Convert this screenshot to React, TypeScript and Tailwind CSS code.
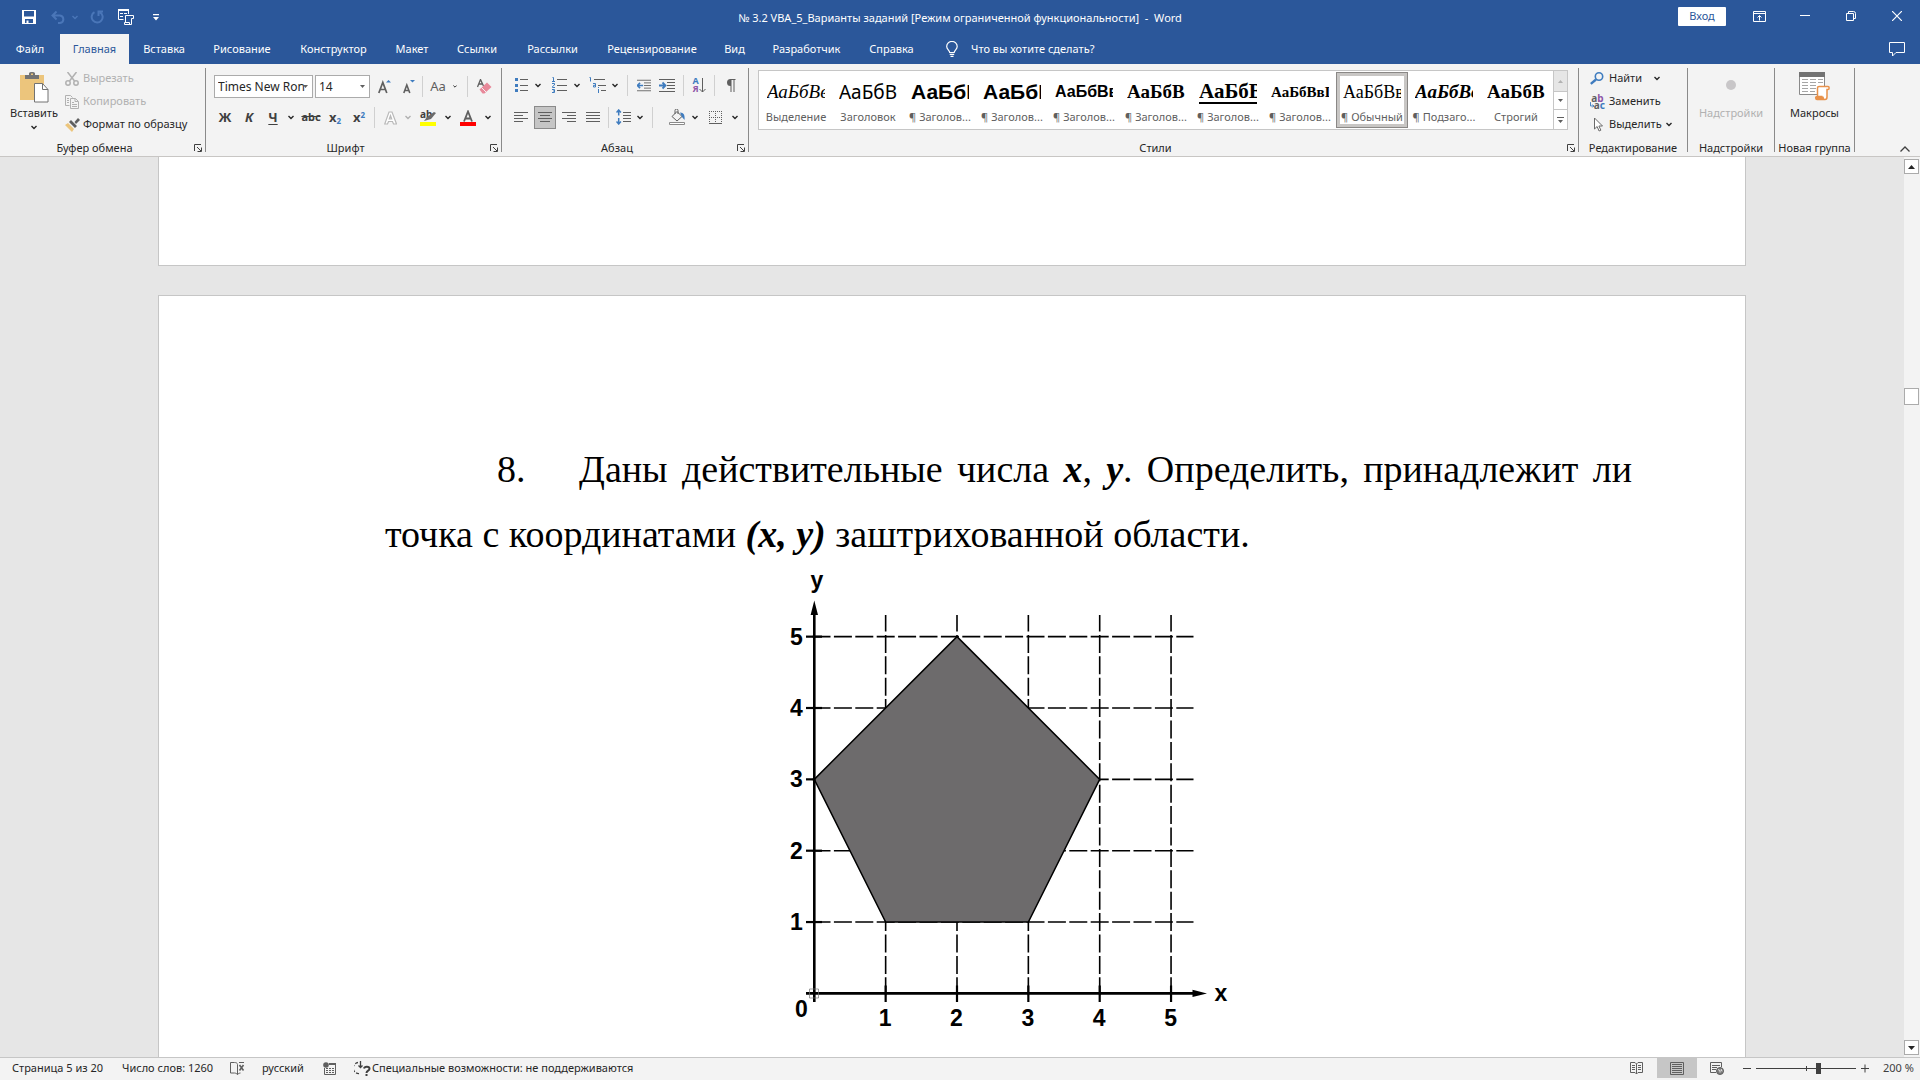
import type { ReactNode } from "react";

const tabs = [
  { name: "Файл", width: "w-[60px]" },
  { name: "Главная", width: "w-[69px]" },
  { name: "Вставка", width: "w-[70px]" },
  { name: "Рисование", width: "w-[86px]" },
  { name: "Конструктор", width: "w-[97px]" },
  { name: "Макет", width: "w-[60px]" },
  { name: "Ссылки", width: "w-[70px]" },
  { name: "Рассылки", width: "w-[81px]" },
  { name: "Рецензирование", width: "w-[118px]" },
  { name: "Вид", width: "w-[47px]" },
  { name: "Разработчик", width: "w-[97px]" },
  { name: "Справка", width: "w-[73px]" },
];

const serif = "font-['Liberation_Serif','Times_New_Roman',serif]";
const sans = "font-['Liberation_Sans',Arial,sans-serif]";

const styles = [
  { name: "Выделение", sample: "АаБбВвГ", look: `${serif} text-[19px] italic` },
  { name: "Заголовок", sample: "АаБбВ", look: "text-[19px]" },
  { name: "¶ Заголов...", sample: "АаБбВ", look: `${sans} text-[21px] font-bold` },
  { name: "¶ Заголов...", sample: "АаБбВ", look: `${sans} text-[21px] font-bold` },
  { name: "¶ Заголов...", sample: "АаБбВвГ", look: `${sans} text-[16px] font-bold` },
  { name: "¶ Заголов...", sample: "АаБбВ", look: `${serif} text-[19px] font-bold` },
  { name: "¶ Заголов...", sample: "АаБбВ", look: `${serif} text-[21px] font-bold underline decoration-2 underline-offset-4` },
  { name: "¶ Заголов...", sample: "АаБбВвГ", look: `${serif} text-[15px] font-bold` },
  { name: "¶ Обычный", sample: "АаБбВвГ", look: `${serif} text-[18px]`, active: true },
  { name: "¶ Подзаго...", sample: "АаБбВвГ", look: `${serif} text-[19px] font-bold italic` },
  { name: "Строгий", sample: "АаБбВ", look: `${serif} text-[19px] font-bold` },
];

function Chevron({ color = "#262626" }: { color?: string }) {
  return (
    <svg width="6" height="5" viewBox="0 0 6 5" fill="none" stroke={color} strokeWidth="1.4">
      <path d="M.5 1 3 3.5 5.5 1" />
    </svg>
  );
}

function Cell({ w, label, children }: { w: string; label: string; children: ReactNode }) {
  return (
    <button aria-label={label} className={`flex h-6 shrink-0 items-center justify-center ${w}`}>
      {children}
    </button>
  );
}

function Sep({ m = "" }: { m?: string }) {
  return <span className={`h-[21px] w-px shrink-0 bg-[#d0d0d0] ${m}`} />;
}

function Lines({ rows }: { rows: [number, number][] }) {
  return (
    <svg width="14" height="13" viewBox="0 0 14 13" stroke="#5f5f5f">
      {rows.map(([a, b], i) => (
        <path key={i} d={`M${a} ${i * 3 + 1.5}H${b}`} />
      ))}
    </svg>
  );
}

function Group({ name, w, launcher, children }: { name: string; w: string; launcher?: boolean; children: ReactNode }) {
  return (
    <section className={`flex h-[84px] flex-col border-r border-[#8a8a8a] ${w}`}>
      <div className="h-[72px]">{children}</div>
      <div className={`relative flex h-3 items-center justify-center pt-[3px] ${launcher ? "pr-4" : ""}`}>
        <span className="leading-4 whitespace-nowrap">{name}</span>
        {launcher && (
          <button aria-label={`${name}: параметры`} className="absolute top-1 right-[3px]">
            <svg width="8" height="8" viewBox="0 0 8 8" fill="none" stroke="#404040">
              <path d="M.5 7V.5H7M3 3l4 4M7.500 3.500v4H3.500" />
            </svg>
          </button>
        )}
      </div>
    </section>
  );
}

function TitleBar() {
  return (
    <header className="relative flex h-[34px] shrink-0 items-center bg-[#2b579a] text-white">
      <div className="flex items-center pl-[22px]">
        <button aria-label="Сохранить">
          <svg width="14" height="14" viewBox="0 0 14 14">
            <path fill="#fff" fillRule="evenodd" d="M0 0h14v14H0zM2 1v5.500h10V1zM3 9v4h1.500v-2.500h2V13H11V9z" />
          </svg>
        </button>
        <button aria-label="Отменить" className="ml-[15px] flex items-center gap-[7px]">
          <svg width="14" height="13" viewBox="0 0 14 13" fill="none" stroke="#4a76b8" strokeWidth="2">
            <path d="M1.500 4.500H9a4 3.800 0 0 1 0 7.500H7M5.500.5l-4 4 4 4" />
          </svg>
          <Chevron color="#4a76b8" />
        </button>
        <button aria-label="Повторить" className="ml-[12px]">
          <svg width="14" height="14" viewBox="0 0 14 14" fill="none" stroke="#4a76b8" strokeWidth="2">
            <path d="M4.500 2.200A5.500 5.500 0 1 0 10 2.300M8.500 6V1.500H13" />
          </svg>
        </button>
        <button aria-label="Печать" className="ml-[14px]">
          <svg width="17" height="16" viewBox="0 0 17 16" fill="none" stroke="#fff">
            <path strokeWidth="2" d="M0 1h11" />
            <path d="M.5 1v9.500h5M10.500 1v4M2 4.500h3M6 4.500h3M2 7.500h3M7.500 13.500v-7h8v3h-2v6h-7v-2h5v2" />
          </svg>
        </button>
        <button aria-label="Настройка панели" className="ml-[18px]">
          <svg width="6" height="7" viewBox="0 0 6 7">
            <path fill="#fff" d="M0 0h6v1.200H0zM0 3h6L3 6.500z" />
          </svg>
        </button>
      </div>
      <h1 className="pointer-events-none absolute inset-x-0 top-[6px] text-center text-[11px] leading-6 whitespace-pre">
        № 3.2 VBA_5_Варианты заданий [Режим ограниченной функциональности]  -  Word
      </h1>
      <div className="ml-auto flex items-center pb-[2px]">
        <button className="mr-[10px] h-[19px] w-12 rounded-[1px] bg-white text-[#2b579a]">Вход</button>
        <button aria-label="Параметры ленты" className="flex w-[46px] justify-center">
          <svg width="13" height="11" viewBox="0 0 13 11" fill="none" stroke="#fff">
            <path d="M.5.5h12v10H.5zM.5 2.500h12M6.500 9.500v-5M4.500 6.500l2-2 2 2" />
          </svg>
        </button>
        <button aria-label="Свернуть" className="flex w-[46px] justify-center">
          <svg width="10" height="10" viewBox="0 0 10 10" stroke="#fff">
            <path d="M0 4.500h10" />
          </svg>
        </button>
        <button aria-label="Свернуть в окно" className="flex w-[46px] justify-center">
          <svg width="10" height="10" viewBox="0 0 10 10" fill="none" stroke="#fff">
            <path d="M.5 2.500h7v7h-7zM2.500 2V.5h5a2 2 0 0 1 2 2v5H8" />
          </svg>
        </button>
        <button aria-label="Закрыть" className="flex w-[46px] justify-center">
          <svg width="10" height="10" viewBox="0 0 10 10" stroke="#fff" strokeWidth="1.200">
            <path d="m0 0 10 10M10 0 0 10" />
          </svg>
        </button>
      </div>
    </header>
  );
}

function TabBar() {
  return (
    <nav className="flex h-[30px] shrink-0 bg-[#2b579a] text-white">
      {tabs.map((tab) => (
        <button
          key={tab.name}
          className={`${tab.width} h-[30px] pt-px text-center ${tab.name === "Главная" ? "bg-[#f3f3f3] text-[#2b579a]" : ""}`}
        >
          {tab.name}
        </button>
      ))}
      <button className="flex items-center gap-[13px] pl-[18px]">
        <svg width="12" height="16" viewBox="0 0 12 16" fill="none" stroke="#fff" strokeWidth="1.200">
          <path d="M3.700 11.500c0-2-3-3-3-6a5.200 5 0 0 1 10.500 0c0 3-3 4-3 6zM3.700 13.400h4.500M4.500 15.300h3" />
        </svg>
        Что вы хотите сделать?
      </button>
      <button aria-label="Примечания" className="mr-[15px] ml-auto">
        <svg width="16" height="15" viewBox="0 0 16 15" fill="none" stroke="#fff">
          <path d="M.5.5h15v10H7L3.500 14v-3.500h-3z" />
        </svg>
      </button>
    </nav>
  );
}

function Clipboard() {
  return (
    <Group name="Буфер обмена" w="w-[206px]" launcher>
      <div className="flex">
        <button className="flex w-[65px] flex-col items-center pt-1 pl-[3px]">
          <svg width="29" height="31" viewBox="0 0 29 31">
            <path fill="#ecc57c" d="M0 3h24v25H0z" />
            <path fill="#737373" d="M5 3h4V1.500C9 .5 10 0 12 0s3 .5 3 1.500V3h4v4H5z" />
            <path fill="#ecc57c" d="M11 1.500h2V3h-2z" />
            <path fill="#fff" stroke="#737373" d="M14.500 11.500h8l5.500 6v12.500H14.500z" />
            <path fill="none" stroke="#737373" d="M22.500 11.500v6H28" />
          </svg>
          <span className="mt-px leading-[18px]">Вставить</span>
          <span className="mt-[3px]"><Chevron /></span>
        </button>
        <div className="-mt-px flex flex-col">
          <button className="flex h-[23px] items-center text-[#b1b1b1]">
            <svg width="14" height="14" viewBox="0 0 14 14" fill="none" stroke="#b1b1b1" strokeWidth="1.500">
              <path d="m2.500 0 7 9M11.500 0l-7 9" />
              <circle cx="3" cy="11" r="2.200" />
              <circle cx="11" cy="11" r="2.200" />
            </svg>
            <span className="pl-1">Вырезать</span>
          </button>
          <button className="flex h-[23px] items-center text-[#b1b1b1]">
            <svg width="14" height="14" viewBox="0 0 14 14" fill="none" stroke="#b1b1b1">
              <path d="M4.500 10.500h-4v-10h5l2 2M2 3.500h2M2 5.500h2M2 7.500h2M5.500 3.500h5l3 3v7h-8zM10 3.500v3h3M7 7.500h2M7 9.500h5M7 11.500h5" />
            </svg>
            <span className="pl-1">Копировать</span>
          </button>
          <button className="flex h-[23px] items-center">
            <svg width="15" height="14" viewBox="0 0 15 14">
              <path fill="#ecc57c" d="m0 7 3-2 6 6-2 3z" />
              <path fill="#5f5f5f" d="m4 4 2-2 6 6-2 2zM9.500 4 13 0l2 2-4 4z" />
            </svg>
            <span className="pl-[3px] whitespace-nowrap">Формат по образцу</span>
          </button>
        </div>
      </div>
    </Group>
  );
}

function Combo({ label, options, w }: { label: string; options: string[]; w: string }) {
  return (
    <label className={`relative h-[23px] ${w}`}>
      <select
        aria-label={label}
        className="h-full w-full appearance-none overflow-hidden border border-[#ababab] bg-white pl-[3px] text-[12px] text-clip text-[#262626]"
      >
        {options.map((o) => (
          <option key={o}>{o}</option>
        ))}
      </select>
      <svg width="5" height="3" viewBox="0 0 5 3" className="pointer-events-none absolute top-[10px] right-[5px]">
        <path fill="#606060" d="M0 0h5L2.500 3z" />
      </svg>
    </label>
  );
}

function FontGroup() {
  return (
    <Group name="Шрифт" w="w-[296px]" launcher>
      <div className="flex h-[37px] items-center pl-2">
        <Combo label="Шрифт" options={["Times New Ron", "Arial"]} w="w-[99px]" />
        <span className="w-[2px]" />
        <Combo label="Размер" options={["14", "16"]} w="w-[55px]" />
        <Cell w="w-[28px]" label="Увеличить размер">
          <svg width="13" height="16" viewBox="0 0 13 16">
            <path fill="none" stroke="#5f5f5f" strokeWidth="1.700" d="m.8 14 4-10.500 4 10.500M2 10.500h5.500" />
            <path fill="#3f7cbf" d="M8 3.500 10.500 1 13 3.500z" />
          </svg>
        </Cell>
        <Cell w="w-[22px]" label="Уменьшить размер">
          <svg width="12" height="16" viewBox="0 0 12 16">
            <path fill="none" stroke="#5f5f5f" strokeWidth="1.600" d="m.8 14 3-8 3 8M1.800 11.500h4" />
            <path fill="#3f7cbf" d="M7 1h5L9.500 3.500z" />
          </svg>
        </Cell>
        <Sep m="ml-[2px]" />
        <Cell w="w-[30px]" label="Регистр"><span className="text-[13px] text-[#5f5f5f]">Aa</span></Cell>
        <Cell w="w-[4px]" label="Варианты регистра"><Chevron /></Cell>
        <Sep m="ml-[10px]" />
        <Cell w="w-[33px]" label="Очистить формат">
          <svg width="15" height="15" viewBox="0 0 15 15">
            <path fill="none" stroke="#5f5f5f" strokeWidth="1.300" d="M.5 8 3.500.5 6.500 7M1.500 5h4" />
            <path fill="#e8899a" d="m2.500 10.500 7.500-7 4.500 4.500-7 6.500H5.500z" />
            <path stroke="#f3f3f3" d="m4.500 8.500 4.500 4.500" />
          </svg>
        </Cell>
      </div>
      <div className="flex h-[25px] items-center pl-[7px] text-[#404040]">
        <Cell w="w-[24px]" label="Полужирный"><b className="text-[13px]">Ж</b></Cell>
        <Cell w="w-[24px]" label="Курсив"><b className="text-[13px] italic">К</b></Cell>
        <Cell w="w-[24px]" label="Подчеркнутый"><b className="text-[13px] underline underline-offset-2">Ч</b></Cell>
        <Cell w="w-[12px]" label="Вид подчеркивания"><Chevron /></Cell>
        <Cell w="w-[28px]" label="Зачеркнутый"><b className="text-[11px] line-through">abc</b></Cell>
        <Cell w="w-[20px]" label="Подстрочный">
          <b className="text-[13px]">x<sub className="text-[8px] text-[#3f7cbf]">2</sub></b>
        </Cell>
        <Cell w="w-[28px]" label="Надстрочный">
          <b className="text-[13px]">x<sup className="text-[8px] text-[#3f7cbf]">2</sup></b>
        </Cell>
        <Sep m="ml-px" />
        <Cell w="w-[30px]" label="Текстовые эффекты">
          <svg width="13" height="14" viewBox="0 0 13 14" fill="#fff" stroke="#b9b9b9" strokeWidth="1.200">
            <path d="M5 1h3l4.500 12H9.500l-1-2.500h-4l-1 2.500H.7zM6.500 4.500l-1.200 3.500h2.400z" />
          </svg>
        </Cell>
        <Cell w="w-[6px]" label="Варианты эффектов"><Chevron color="#b1b1b1" /></Cell>
        <Cell w="w-[34px]" label="Цвет выделения">
          <span className="relative flex h-4 w-4 flex-col justify-end">
            <b className="absolute -top-px left-0 text-[10px] leading-[10px]">ab</b>
            <svg width="12" height="9" viewBox="0 0 12 9" className="absolute top-[2px] right-0">
              <path fill="#6a6a6a" d="m0 9 3-4L10 0l2 1-5 6z" />
            </svg>
            <span className="h-1 bg-[#ffff00]" />
          </span>
        </Cell>
        <Cell w="w-[6px]" label="Палитра выделения"><Chevron /></Cell>
        <Cell w="w-[34px]" label="Цвет текста">
          <svg width="16" height="16" viewBox="0 0 16 16">
            <path fill="none" stroke="#5f5f5f" strokeWidth="1.800" d="m4 11.500 4-10 4 10M5 8.500h6" />
            <path fill="#f00" d="M0 12h16v4H0z" />
          </svg>
        </Cell>
        <Cell w="w-[6px]" label="Палитра текста"><Chevron /></Cell>
      </div>
    </Group>
  );
}

function IndentIcon({ flip }: { flip?: boolean }) {
  return (
    <svg width="16" height="13" viewBox="0 0 16 13" fill="none" stroke="#5f5f5f">
      <path d="M0 .5h16M8 3.500h8M8 6.500h8M8 9.500h8M0 12.500h16" />
      <path stroke="#3f7cbf" strokeWidth="1.800" d={flip ? "M0 6.500h6M3.500 3.500l3 3-3 3" : "M1 6.500h6M3.500 3.500l-3 3 3 3"} />
    </svg>
  );
}

function ParagraphGroup() {
  return (
    <Group name="Абзац" w="w-[247px]" launcher>
      <div className="flex h-[34px] items-center pl-[10px]">
        <Cell w="w-[18px]" label="Маркеры">
          <svg width="13" height="14" viewBox="0 0 13 14" stroke="#5f5f5f">
            <path d="M5 1.500h8M5 7.500h8M5 12.500h8" />
            <path stroke="none" fill="#3f7cbf" d="M0 0h3v3H0zM0 6h3v3H0zM0 11h3v3H0z" />
          </svg>
        </Cell>
        <Cell w="w-[16px]" label="Библиотека маркеров"><Chevron /></Cell>
        <Cell w="w-[26px]" label="Нумерация">
          <svg width="15" height="16" viewBox="0 0 15 16" fill="none" stroke="#5f5f5f">
            <path d="M5 2.500h10M5 8.500h10M5 13.500h10" />
            <path stroke="#3f7cbf" d="M.5.500h1v4M0 4.500h3M0 6.500h2.500v1.500l-2 1.500v1H3M0 12.500h2.500V15.500H0M1 14h1.500" />
          </svg>
        </Cell>
        <Cell w="w-[10px]" label="Библиотека номеров"><Chevron /></Cell>
        <Cell w="w-[30px]" label="Многоуровневый список">
          <svg width="17" height="16" viewBox="0 0 17 16" fill="none" stroke="#5f5f5f">
            <path d="M5 2.500h11M9 8.500h8M12 13.500h5" />
            <path stroke="#3f7cbf" d="M.5.500h1v4M4 6.500h2.500v3.500h-2V8.300h2M9.500 10v1M9.500 12v4" />
          </svg>
        </Cell>
        <Cell w="w-[6px]" label="Список уровней"><Chevron /></Cell>
        <Sep m="mx-[9px]" />
        <Cell w="w-[14px]" label="Уменьшить отступ"><IndentIcon /></Cell>
        <Cell w="w-[32px]" label="Увеличить отступ"><IndentIcon flip /></Cell>
        <Sep />
        <Cell w="w-[30px]" label="Сортировка">
          <span className="flex items-center">
            <b className="flex flex-col text-[9px] leading-[8px]">
              <span className="text-[#3f7cbf]">А</span>
              <span className="text-[#8e56a8]">Я</span>
            </b>
            <svg width="7" height="15" viewBox="0 0 7 15" fill="none" stroke="#5f5f5f">
              <path d="M3.500 0v14M.5 11l3 3 3-3" />
            </svg>
          </span>
        </Cell>
        <Sep />
        <Cell w="w-[30px]" label="Все знаки">
          <svg width="11" height="13" viewBox="0 0 11 13">
            <path fill="#5f5f5f" d="M10.500 0v1H9.500v12h-1V1h-2v12h-1V7a3.500 3.500 0 1 1 0-7z" />
          </svg>
        </Cell>
      </div>
      <div className="flex h-[30px] items-center pl-[7px]">
        <Cell w="w-[24px]" label="По левому краю"><Lines rows={[[0, 14], [0, 9], [0, 14], [0, 9]]} /></Cell>
        <span className="mx-px flex h-[23px] w-[22px] items-center justify-center border border-[#8a8a8a] bg-[#c5c5c5]">
          <Cell w="w-[20px]" label="По центру"><Lines rows={[[0, 14], [2, 12], [0, 14], [2, 12]]} /></Cell>
        </span>
        <Cell w="w-[24px]" label="По правому краю"><Lines rows={[[0, 14], [5, 14], [0, 14], [5, 14]]} /></Cell>
        <Cell w="w-[24px]" label="По ширине"><Lines rows={[[0, 14], [0, 14], [0, 14], [0, 14]]} /></Cell>
        <Sep m="ml-[3px]" />
        <Cell w="w-[28px]" label="Интервал">
          <svg width="15" height="16" viewBox="0 0 15 16" fill="none" stroke="#5f5f5f">
            <path d="M7 3.500h8M7 6.500h8M7 9.500h8M7 12.500h8" />
            <path stroke="#3f7cbf" strokeWidth="1.500" d="M2.700 1v5.500M.5 3.500l2.200-2.500 2.200 2.500M2.700 9v5.500M.5 12.500l2.200 2.500 2.200-2.500" />
          </svg>
        </Cell>
        <Cell w="w-[6px]" label="Варианты интервала"><Chevron /></Cell>
        <Sep m="mx-[9px]" />
        <Cell w="w-[30px]" label="Заливка">
          <svg width="17" height="16" viewBox="0 0 17 16" fill="none">
            <path stroke="#5f5f5f" d="m3 7.500 5-5 5 5-5 4.500zM6 5V1.500a1.500 1.500 0 0 1 3 0V5" />
            <path fill="#3f7cbf" d="M11 3.500c4 0 5 3 4.500 7.500L13 8z" />
            <path fill="#fff" stroke="#8a8a8a" d="M.5 13.500h15v2H.5z" />
          </svg>
        </Cell>
        <Cell w="w-[6px]" label="Палитра заливки"><Chevron /></Cell>
        <Cell w="w-[34px]" label="Границы">
          <svg width="13" height="13" viewBox="0 0 13 13" fill="none" stroke="#5f5f5f">
            <path strokeDasharray="1 1" d="M0 .5h13M.5 0v12M12.500 0v12M6.500 0v12M0 6.500h13" />
            <path d="M0 12.500h13" />
          </svg>
        </Cell>
        <Cell w="w-[6px]" label="Виды границ"><Chevron /></Cell>
      </div>
    </Group>
  );
}

function StylesGroup() {
  return (
    <Group name="Стили" w="flex-1" launcher>
      <div className="mr-[10px] ml-[9px] flex pt-[2px]">
        <div className="flex h-[60px] flex-1 items-center border border-[#c6c6c6] bg-white pl-px">
          {styles.map((s, i) => (
            <button
              key={i}
              className={`flex h-14 w-[72px] shrink-0 flex-col items-center overflow-hidden ${s.active ? "border border-[#8a8886] pt-px shadow-[inset_0_0_0_3px_#c8c6c4]" : "pt-[2px]"}`}
            >
              <span className={`flex h-9 w-[58px] shrink-0 items-center overflow-hidden whitespace-nowrap text-black ${s.look}`}>
                {s.sample}
              </span>
              <span className="text-[11px] leading-[14px] whitespace-nowrap text-[#5f5f5f]">{s.name}</span>
            </button>
          ))}
        </div>
        <div className="flex w-[14px] flex-col border border-l-0 border-[#c6c6c6]">
          <button aria-label="Вверх" className="flex h-5 items-center justify-center bg-[#e6e6e6]">
            <svg width="5" height="3" viewBox="0 0 5 3"><path fill="#b1b1b1" d="M0 3h5L2.500 0z" /></svg>
          </button>
          <button aria-label="Вниз" className="flex h-[19px] items-center justify-center border-y border-[#c6c6c6] bg-white">
            <svg width="5" height="3" viewBox="0 0 5 3"><path fill="#5f5f5f" d="M0 0h5L2.500 3z" /></svg>
          </button>
          <button aria-label="Все стили" className="flex h-[19px] items-center justify-center bg-white">
            <svg width="7" height="6" viewBox="0 0 7 6"><path fill="#5f5f5f" d="M0 0h7v1H0zM1 3h5L3.500 6z" /></svg>
          </button>
        </div>
      </div>
    </Group>
  );
}

function EditingGroup() {
  return (
    <Group name="Редактирование" w="w-[109px]">
      <div className="-mt-px flex flex-col items-start pl-[11px]">
        <button className="flex h-[23px] items-center">
          <svg width="15" height="13" viewBox="0 0 15 13" fill="none" stroke="#3f7cbf">
            <circle cx="9" cy="4.500" r="3.700" strokeWidth="1.600" />
            <path strokeWidth="2.400" d="M6 7.500.8 11.800" />
          </svg>
          <span className="pr-[12px] pl-1">Найти</span>
          <Chevron />
        </button>
        <button className="flex h-[23px] items-center">
          <span className="flex w-[15px] flex-col text-[10px] leading-[7px] font-bold">
            <span className="text-[#5f5f5f]">a<span className="text-[#8e56a8]">b</span></span>
            <span className="flex justify-end text-[#5f5f5f]">
              <svg width="4" height="6" viewBox="0 0 4 6" fill="none" stroke="#3f7cbf"><path d="M.5 0v4H4M2.500 2.500 4 4 2.500 5.500" /></svg>
              a<span className="text-[#3f7cbf]">c</span>
            </span>
          </span>
          <span className="pl-1">Заменить</span>
        </button>
        <button className="flex h-[23px] items-center">
          <svg width="15" height="15" viewBox="0 0 15 15" fill="#fff" stroke="#6a6a6a">
            <path d="M4.500 1v11l2.600-2.500 2 4.500 1.800-.8-2-4.200h3.600z" />
          </svg>
          <span className="pr-[4px] pl-1">Выделить</span>
          <Chevron />
        </button>
      </div>
    </Group>
  );
}

function Ribbon() {
  return (
    <div className="flex h-[93px] shrink-0 border-b border-[#c8c6c4] bg-[#f3f3f3] pt-1">
      <Clipboard />
      <FontGroup />
      <ParagraphGroup />
      <StylesGroup />
      <EditingGroup />
      <Group name="Надстройки" w="w-[87px]">
        <button disabled className="flex w-full flex-col items-center pt-3 text-[#b1b1b1]">
          <span className="h-[10px] w-[10px] rounded-full bg-[#c8c6c8]" />
          <span className="mt-[14px] leading-[18px]">Надстройки</span>
        </button>
      </Group>
      <Group name="Новая группа" w="w-[80px]">
        <button className="flex w-full flex-col items-center pt-1">
          <svg width="31" height="29" viewBox="0 0 31 29">
            <path fill="#fff" stroke="#8a8a8a" d="M.5 2.500h25v20H.5z" />
            <path fill="#737373" d="M0 0h26v5H0z" />
            <path stroke="#a6a6a6" d="M3 7.500h6M11 7.500h6M19 7.500h5M3 10.500h6M11 10.500h6M19 10.500h5M3 13.500h6M11 13.500h6M3 16.500h6M11 16.500h6M3 19.500h6M11 19.500h5" />
            <path fill="#fff" stroke="#e8914a" strokeWidth="1.500" d="M18.500 24V16c0-1 .5-1.500 1.500-1.500h9c1.500 0 1.500 3 0 3h-1V25c0 2-.5 2.500-2 2.500h-8c-1.500 0-2-3 0-3h5.500" />
            <path fill="#e8914a" d="M17 24.500h7.500l1 3H17z" />
          </svg>
          <span className="mt-[3px] leading-[18px]">Макросы</span>
        </button>
      </Group>
      <div className="flex w-[65px] items-end justify-end pr-[10px] pb-1">
        <button aria-label="Свернуть ленту">
          <svg width="10" height="6" viewBox="0 0 10 6" fill="none" stroke="#404040" strokeWidth="1.300">
            <path d="M.5 5.500 5 1l4.500 4.500" />
          </svg>
        </button>
      </div>
    </div>
  );
}

const step = 71.35;
const px = (n: number) => 53.3 + n * step;
const py = (n: number) => 433.4 - n * step;
const marks = [1, 2, 3, 4, 5];
const pentagon = [[0, 3], [2, 5], [4, 3], [3, 1], [1, 1]].map(([x, y]) => `${px(x)},${py(y)}`).join(" ");

function Plot() {
  return (
    <svg width="438" height="466" viewBox="29 11 438 466" className={`mx-auto mt-1 block ${sans} text-[23px] font-bold`}>
      <g stroke="#000" strokeWidth="1.600" strokeDasharray="18 3.400">
        {marks.map((n) => (
          <g key={n}>
            <path d={`M51.500 ${py(n)}H432.500`} />
            <path d={`M${px(n)} 435.300V55`} />
          </g>
        ))}
      </g>
      <polygon points={pentagon} fill="#6d6b6c" stroke="#000" strokeWidth="1.500" />
      <g stroke="#000" strokeWidth="2.200">
        {marks.map((n) => (
          <g key={n}>
            <path d={`M45 ${py(n)}H${n === 3 ? 54 : 61}`} />
            <path d={`M${px(n)} 425.500V442`} />
          </g>
        ))}
      </g>
      <path stroke="#000" strokeWidth="2.600" d={`M${px(0)} 50V442M45 ${py(0)}H434`} />
      <path d="M53.300 40.500 57 55h-7.400zM446 433.400 431.500 429.700v7.400z" />
      <path fill="none" stroke="#777" strokeWidth=".7" d="M48.500 429h9v9h-9z" />
      <g textAnchor="middle">
        {marks.map((n) => (
          <g key={n}>
            <text x={px(n) - 0.5} y="466">{n}</text>
            <text x="35.500" y={py(n) + 8}>{n}</text>
          </g>
        ))}
        <text x="40.500" y="457">0</text>
        <text x="460" y="441">x</text>
        <text x="56" y="28">y</text>
      </g>
    </svg>
  );
}

function DocumentArea() {
  return (
    <div className="flex min-h-0 flex-1">
      <main className="flex flex-1 flex-col items-center gap-[29px] overflow-hidden">
        <div className="h-[109px] w-[1588px] shrink-0 border border-t-0 border-[#c6c6c6] bg-white" />
        <article className="w-[1588px] shrink-0 border border-b-0 border-[#c6c6c6] bg-white pt-[141px] pr-[113px] pb-8 pl-[226px] text-black">
          <p className={`indent-[112px] text-justify text-[38px] leading-[65px] ${serif}`}>
            <span className="inline-block w-[82px] indent-0">8.</span>Даны действительные числа{" "}
            <em className="font-bold">x</em>, <em className="font-bold">y</em>. Определить, принадлежит ли точка с
            координатами <em className="font-bold">(x, y)</em> заштрихованной области.
          </p>
          <Plot />
        </article>
      </main>
      <div className="flex w-4 flex-col bg-[#f3f3f3] pt-[2px] pr-px">
        <button aria-label="Прокрутить вверх" className="flex h-[15px] items-center justify-center border border-[#ababab] bg-white">
          <svg width="7" height="4" viewBox="0 0 7 4"><path fill="#262626" d="M0 4h7L3.500 0z" /></svg>
        </button>
        <div className="h-[214px]" />
        <div className="h-[17px] border border-[#ababab] bg-white" />
        <button aria-label="Прокрутить вниз" className="mt-auto mb-[2px] flex h-[15px] items-center justify-center border border-[#ababab] bg-white">
          <svg width="7" height="4" viewBox="0 0 7 4"><path fill="#262626" d="M0 0h7L3.500 4z" /></svg>
        </button>
      </div>
    </div>
  );
}

function StatusBar() {
  return (
    <footer className="flex h-[23px] shrink-0 items-center border-t border-[#c6c6c6] bg-[#f3f3f3] pb-[2px] pl-3">
      <span className="w-[110px]">Страница 5 из 20</span>
      <span className="w-[108px]">Число слов: 1260</span>
      <button aria-label="Правописание" className="w-8">
        <svg width="15" height="13" viewBox="0 0 15 13" fill="none" stroke="#5f5f5f">
          <path d="M7.500 12.500c-1-1-2-1.500-3-1.500h-4V.5h4c1.500 0 3 .5 3 2zM7.500 12.500c1-1 2-1.500 3-1.500M9 .5h5" />
          <path strokeWidth="1.600" d="m9.500 3 4 5.500M13.500 3l-4 5.500" />
        </svg>
      </button>
      <span className="w-[61px]">русский</span>
      <button aria-label="Запись макроса" className="w-[31px]">
        <svg width="13" height="13" viewBox="0 0 13 13" fill="none" stroke="#5f5f5f">
          <path d="M1.500 6v6.500h11v-11H6" />
          <path strokeWidth="2" d="M6 2h7" />
          <path strokeDasharray="2 1" d="M3 6.500h8M3 8.500h8M3 10.500h8" />
          <circle cx="3" cy="3" r="2.800" fill="#5f5f5f" stroke="none" />
        </svg>
      </button>
      <button className="flex items-center gap-px pt-px">
        <svg width="17" height="15" viewBox="0 0 17 15" fill="none" stroke="#404040" strokeWidth="1.300">
          <path strokeDasharray="3 1.500" d="M4 1.500A5.500 5.500 0 0 0 5.500 12.500" />
          <path d="M6.500 0v6M4.500 4.500l2 2 2-2" />
          <path strokeWidth="2" d="M10 7.500c.5-2.500 5.500-2.500 5.500.3 0 2-3 1.700-3 4.200M12.500 13v2" />
        </svg>
        Специальные возможности: не поддерживаются
      </button>
      <div className="ml-auto flex h-full items-center">
        <button aria-label="Режим чтения" className="mr-[14px]">
          <svg width="13" height="12" viewBox="0 0 13 12" fill="none" stroke="#5f5f5f">
            <path d="M6.500 2 5 .5H.5v10H5L6.500 12 8 10.500h4.500V.5H8zV12M2 3.500h3M2 5.500h3M2 7.500h3M8 3.500h3M8 5.500h3M8 7.500h3" />
          </svg>
        </button>
        <button aria-label="Разметка страницы" className="flex h-5 w-10 items-center justify-center bg-[#c6c6c6]">
          <svg width="14" height="13" viewBox="0 0 14 13" fill="none" stroke="#5f5f5f">
            <path d="M.5.5h13v12H.5zM2 2.500h10M2 4.500h10M2 6.500h10M2 8.500h10M2 10.500h10" />
          </svg>
        </button>
        <button aria-label="Веб-документ" className="ml-[13px]">
          <svg width="14" height="13" viewBox="0 0 14 13" fill="none" stroke="#5f5f5f">
            <path d="M6 10.500H.5V.5h11V5M2 3.500h8M2 5.500h5M2 7.500h4" />
            <circle cx="10" cy="9" r="3.500" fill="#7a7a7a" />
            <path stroke="#e6e6e6" d="m8 7.500 2 1v2M11.500 7l-.5 1.500 1.500.5" />
          </svg>
        </button>
        <button aria-label="Уменьшить" className="mr-[5px] ml-[19px]">
          <svg width="8" height="9" viewBox="0 0 8 9" stroke="#404040"><path d="M0 4.500h8" /></svg>
        </button>
        <span className="relative flex h-3 w-[100px] items-center">
          <span className="absolute left-[50px] h-[5px] w-px bg-[#404040]" />
          <input
            type="range"
            aria-label="Масштаб"
            min={0}
            max={100}
            defaultValue={63}
            className="relative h-px w-full appearance-none bg-[#404040] [&::-webkit-slider-thumb]:h-[11px] [&::-webkit-slider-thumb]:w-[5px] [&::-webkit-slider-thumb]:appearance-none [&::-webkit-slider-thumb]:bg-[#404040]"
          />
        </span>
        <button aria-label="Увеличить" className="mr-[14px] ml-[5px]">
          <svg width="8" height="9" viewBox="0 0 8 9" stroke="#404040"><path d="M0 4.500h8M4 .5v8" /></svg>
        </button>
        <span className="w-[37px] whitespace-nowrap text-[#404040]">200 %</span>
      </div>
    </footer>
  );
}

export default function App() {
  return (
    <div className="flex h-screen flex-col overflow-hidden bg-[#e6e6e6] font-['Noto_Sans','Open_Sans',sans-serif] text-[11px] text-[#262626]">
      <TitleBar />
      <TabBar />
      <Ribbon />
      <DocumentArea />
      <StatusBar />
    </div>
  );
}
